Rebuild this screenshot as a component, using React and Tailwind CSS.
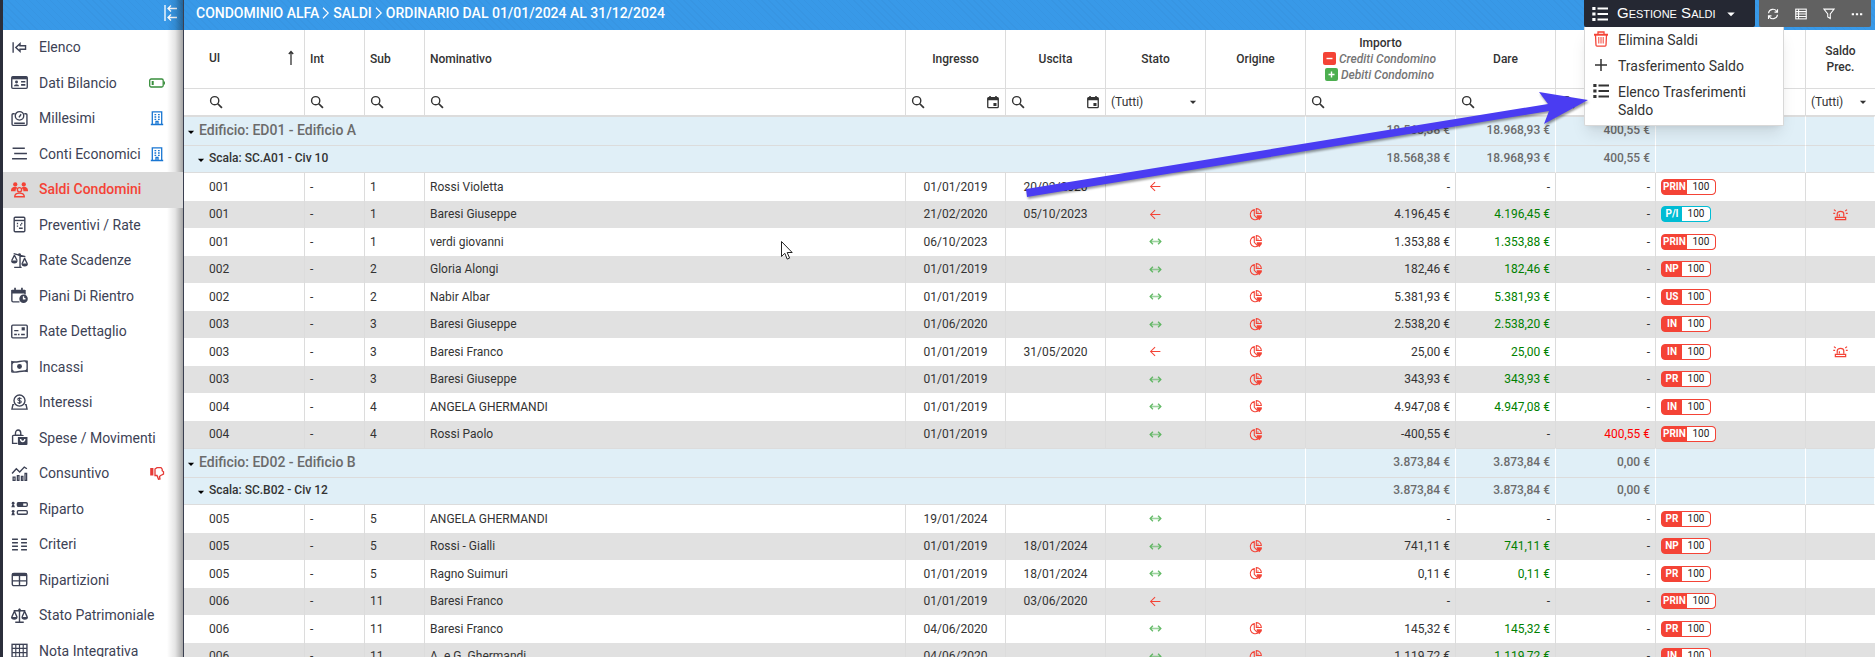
import React from "react";

const stroke = { fill: "none", stroke: "currentColor", strokeWidth: 1.3 };

function Icon({ size = "size-4", box = "0 0 16 16", children }) {
  return (
    <svg viewBox={box} className={`${size} shrink-0`} aria-hidden="true" {...stroke}>
      {children}
    </svg>
  );
}

const solid = { fill: "currentColor", stroke: "none" };

const glyphs = {
  back: (
    <>
      <path d="M2 3v10M4.500 8l4-3.600v2h5.200v3.200H8.500v2z" />
    </>
  ),
  idCard: (
    <>
      <rect x="0.700" y="2.500" width="14.600" height="11" rx="1" />
      <path d="M1 3.800h14" strokeWidth="2.400" />
      <circle cx="5.200" cy="7.500" r="1.400" {...solid} />
      <path d="M2.800 11.500c0-2.600 4.800-2.600 4.800 0zM9.500 6.500h4v1.500h-4zM9.500 9.500h4V11h-4z" {...solid} />
    </>
  ),
  scale: (
    <>
      <path d="M3.500 3.500H2a1 1 0 0 0-1 1v9a1 1 0 0 0 1 1h12a1 1 0 0 0 1-1v-9a1 1 0 0 0-1-1h-1.500M3 12.500h10" />
      <circle cx="8" cy="5.500" r="4" />
      <path d="M7.500 7l2-3" />
    </>
  ),
  lines: <path d="M1.500 3h11.500M3 8h12M1 13h14" />,
  people: (
    <>
      <circle cx="4" cy="3.200" r="2" {...solid} />
      <circle cx="12" cy="3.200" r="2" {...solid} />
      <path d="M0 9c0-4 5-4.500 6-2.200-1.500.7-1.800 1.500-1.600 2.800H0zM16 9c0-4-5-4.500-6-2.200 1.500.7 1.800 1.500 1.600 2.800H16z" {...solid} />
      <circle cx="8" cy="8.200" r="2" />
      <path d="M3.500 14.800c0-4.500 9-4.500 9 0z" />
    </>
  ),
  calculator: (
    <>
      <rect x="3" y="1.200" width="10" height="13.600" rx="1" />
      <path d="M3 4.200h10" />
      <path d="M5.500 7h1.200M9.500 7h1.200M5.500 9.500h1.200M8.500 8.500h1.200M7.500 11.500H11" />
    </>
  ),
  scalesTilt: (
    <>
      <path d="M8.500 2v12.500M3 14.500h7M2.500 1.500l11 3M3.200 3L.7 8M3.200 3l2.500 5M12.800 6l-2.400 5M12.800 6l2.500 5" />
      <path d="M0 8h6.200a3.100 2.800 0 0 1-6.200 0zM9.800 10.800H16a3.100 2.800 0 0 1-6.200 0z" {...solid} />
      <circle cx="8" cy="2.500" r="1.300" {...solid} />
    </>
  ),
  calendarClock: (
    <>
      <path d="M8 14H2a1.200 1.200 0 0 1-1.200-1.200V3.500h12.400V7" />
      <path d="M.8 2.500h12.400V6H.8zM3 .8h1.600v2H3zM9.500.8h1.600v2H9.500z" {...solid} />
      <circle cx="11.800" cy="11" r="4" {...solid} />
      <path d="M11.800 8.800V11h1.800" stroke="white" />
    </>
  ),
  certificate: (
    <>
      <rect x="0.700" y="2" width="14.600" height="12" rx="1" />
      <path d="M3 7.200h4M3 10.800h2.500M6.500 10.800h1.500M9.500 10.800H13" />
      <path d="M10 4h3v3h-3z" {...solid} />
    </>
  ),
  cash: (
    <>
      <path d="M.8 3.500c5 1.500 9.500-2 14.400-.5v9.500c-5-1.500-9.500 2-14.400.5z" />
      <circle cx="8" cy="8" r="2.300" {...solid} />
      <path d="M1 3.500h2.500L1 6zM15 12.500h-2.500L15 10zM1 13v-2.500L3.500 13zM15 3v2.500L12.500 3z" {...solid} />
    </>
  ),
  coin: (
    <>
      <circle cx="8" cy="6.200" r="5.200" />
      <path d="M9.800 4.800C9 3.300 6.300 3.700 6.400 5.100c.1 1.500 3.300.8 3.300 2.300S7 9 6.200 7.700M8 3v6.500" strokeWidth="1" />
      <path d="M3 10H1.800l-.9 4.200h14.200L14.200 10H13" />
    </>
  ),
  bag: (
    <>
      <path d="M6 13.500H1.500V6.500c0-1 10-1 10 0M4.200 6V4c0-4 5-4 5 0v2" />
      <path d="M6.500 7.500h9V14a1 1 0 0 1-1 1h-7a1 1 0 0 1-1-1z" {...solid} />
      <path d="M9 9.500c0 3 4 3 4 0" stroke="white" />
    </>
  ),
  chart: (
    <>
      <path d="M1 8l4-4.500 3.200 3L12.500 2 15 3.500" />
      <path d="M2 11.500h1.800v3H2zM6 10h1.500v4.500H6zM9.800 10.800h1.400v3.700H9.800zM13.200 8h1.500v6.500h-1.500z" strokeWidth="1.200" />
    </>
  ),
  share: (
    <>
      <circle cx="2" cy="3" r="1.300" {...solid} />
      <path d="M.3 6.800h3.400L2.700 4h-1.400zM.3 14.300h3.400l-1-2.800h-1.400z" {...solid} />
      <circle cx="2" cy="10.600" r="1.300" {...solid} />
      <rect x="6" y="2.600" width="9.300" height="3.400" rx="1" />
      <path d="M6 2.600h5.500V6H6z" {...solid} />
      <rect x="6" y="10" width="9.300" height="3.400" rx="1" />
    </>
  ),
  columns: <path d="M1 3h5.500M1 6.300h5.500M1 9.700h5.500M1 13h5.500M9.500 3H15M9.500 6.300H15M9.500 9.700H15M9.500 13H15" />,
  table: (
    <>
      <rect x="1.200" y="2.200" width="13.600" height="11.600" rx="1.500" />
      <path d="M1 3.500h14" strokeWidth="2.600" />
      <path d="M1 9.300h14M8 4v10" />
    </>
  ),
  scales: (
    <>
      <path d="M8 1.500v12.500M4 14.300h8M2.500 3.500h11M3.200 4L.7 9.500M3.200 4l2.500 5.500M12.800 4l-2.400 5.500M12.800 4l2.500 5.500" />
      <path d="M0 9.300h6.200a3.100 2.600 0 0 1-6.200 0zM9.800 9.300H16a3.100 2.600 0 0 1-6.200 0z" {...solid} />
      <circle cx="8" cy="3" r="1.300" {...solid} />
    </>
  ),
  grid: (
    <>
      <rect x="1" y="2.200" width="14" height="12" />
      <path d="M1 6h14M1 10h14M4.500 2v12M8 2v12M11.500 2v12" strokeWidth="1.100" />
    </>
  ),
  battery: (
    <>
      <rect x="0.700" y="4" width="13.500" height="8" rx="1.500" />
      <path d="M15.300 6.500v3" />
      <path d="M2.700 6h2v4h-2z" {...solid} />
    </>
  ),
  building: (
    <>
      <path d="M3.300 14.500V1.800h9.400v12.700M1.800 14.500h12.400M7 14v-2.500h2V14" />
      <path d="M5.500 4.700h1.700M9 4.700h1.700M5.500 7h1.700M9 7h1.700M5.500 9.300h1.700M9 9.300h1.700" />
    </>
  ),
  thumbDown: (
    <>
      <path d="M1.200 3h3.200v7.500H1.200z" {...solid} />
      <path d="M6 4l2-1.300h4l1.200 1.500v1.500l1.300 1v2.500l-2.800 1.300-1.200 1 .5 2.500-1.500.3L8 10.500H6z" />
    </>
  ),
  list: (
    <>
      <path d="M5.500 2.500H16M5.500 8H16M5.500 13.500H16" strokeWidth="1.900" />
      <path d="M.3 1h3.200v3H.3zM.3 6.500h3.200v3H.3zM.3 12h3.200v3H.3z" {...solid} />
    </>
  ),
  trash: (
    <>
      <path d="M1 3.500h14M5 3V1h6v2M2.500 4l.5 10.200a1 1 0 0 0 1 .9h8a1 1 0 0 0 1-.9L13.500 4" />
      <path d="M5.800 6v6.500M8 6v6.500M10.200 6v6.500" strokeWidth="1" />
      <path d="M1 3h14v1.600H1z" {...solid} />
    </>
  ),
  plus: <path d="M8 2v12M2 8h12" strokeWidth="1.500" />,
  search: (
    <>
      <circle cx="6.500" cy="6.500" r="4.700" strokeWidth="1.600" />
      <path d="M10 10l4.800 4.800" strokeWidth="2" />
    </>
  ),
  calendar: (
    <>
      <rect x="2" y="3" width="12" height="11.500" rx="1" strokeWidth="1.500" />
      <path d="M2 3h12v3H2zM3.700 1h1.800v2H3.700zM10.500 1h1.800v2h-1.800zM8.500 9h3.500v3.500H8.500z" {...solid} />
    </>
  ),
  caret: <path d="M3 6h10l-5 5z" {...solid} />,
  arrowLeft: <path d="M14 8H2M7.500 2.500L2 8l5.500 5.500" />,
  arrowBoth: (
    <>
      <path d="M2 8h12" strokeWidth="2" opacity="0.550" />
      <path d="M4.800 4.700L1.500 8l3.300 3.300M11.200 4.700L14.500 8l-3.300 3.300" strokeWidth="1.700" opacity="0.850" />
    </>
  ),
  pie: (
    <>
      <path d="M6.500 2A6.300 6.300 0 1 0 11 13.600L6.500 9z" />
      <path d="M9 .8a6 6 0 0 1 6.200 6H9z" />
      <path d="M11 4v2.500" strokeWidth="1" />
      <path d="M9.500 9h6.300v2.200L12.700 15 9.500 11z" {...solid} />
    </>
  ),
  siren: (
    <>
      <path d="M4.500 10.500V7.200c0-3.500 7-3.500 7 0v3.300M6.800 10V7.800" />
      <path d="M2.500 11h11v2.500h-11z" />
      <path d="M.3 6.800h2M1 2.800l1.900 1.500M15.700 6.800h-2M15 2.800l-1.900 1.500" />
    </>
  ),
  refresh: (
    <>
      <path d="M2 7a6 6 0 0 1 11.300-2M14 9A6 6 0 0 1 2.700 11M14 1.500V5.500h-4M2 14.500v-4h4" strokeWidth="1.500" />
    </>
  ),
  rows: (
    <>
      <rect x="1" y="1.500" width="14" height="13" strokeWidth="1.400" />
      <path d="M1 4.800h14M1 8h14M1 11.200h14M4.800 1.500v13" strokeWidth="1.400" />
    </>
  ),
  funnel: <path d="M1.200 1.500h13.600L9.700 8v6l-3.400-2V8z" strokeWidth="1.400" />,
  dots: <path d="M1 7h3v2.500H1zM6.500 7h3v2.500h-3zM12 7h3v2.500h-3z" {...solid} />,
  chevron: <path d="M4 1l7 7-7 7" strokeWidth="1.500" />,
  collapse: (
    <>
      <path d="M2 0v16M14 3.500H5M8 .5l-3 3 3 3M14 12.500H5M8 9.500l-3 3 3 3" />
    </>
  ),
  sortUp: <path d="M8 15V1.500M5.800 4L8 1.500 10.200 4" strokeWidth="1.300" />,
};

const menu = [
  ["Elenco", "back"],
  ["Dati Bilancio", "idCard", "battery", "text-[#388e3c]"],
  ["Millesimi", "scale", "building", "text-[#1976d2]"],
  ["Conti Economici", "lines", "building", "text-[#1976d2]"],
  ["Saldi Condomini", "people"],
  ["Preventivi / Rate", "calculator"],
  ["Rate Scadenze", "scalesTilt"],
  ["Piani Di Rientro", "calendarClock"],
  ["Rate Dettaglio", "certificate"],
  ["Incassi", "cash"],
  ["Interessi", "coin"],
  ["Spese / Movimenti", "bag"],
  ["Consuntivo", "chart", "thumbDown", "text-[#e53935]"],
  ["Riparto", "share"],
  ["Criteri", "columns"],
  ["Ripartizioni", "table"],
  ["Stato Patrimoniale", "scales"],
  ["Nota Integrativa", "grid"],
];

const D = "-";
// [ui, sub, name, in, out, closed, origin, importo, dare, avere, tag, alarm]
const blocks = [
  {
    building: "Edificio: ED01 - Edificio A",
    stair: "Scala: SC.A01 - Civ 10",
    totals: ["18.568,38 €", "18.968,93 €", "400,55 €"],
    rows: [
      ["001", "1", "Rossi Violetta", "01/01/2019", "20/02/2020", 1, 0, D, D, D, "PRIN", 0],
      ["001", "1", "Baresi Giuseppe", "21/02/2020", "05/10/2023", 1, 1, "4.196,45 €", "4.196,45 €", D, "P/I", 1],
      ["001", "1", "verdi giovanni", "06/10/2023", "", 0, 1, "1.353,88 €", "1.353,88 €", D, "PRIN", 0],
      ["002", "2", "Gloria Alongi", "01/01/2019", "", 0, 1, "182,46 €", "182,46 €", D, "NP", 0],
      ["002", "2", "Nabir Albar", "01/01/2019", "", 0, 1, "5.381,93 €", "5.381,93 €", D, "US", 0],
      ["003", "3", "Baresi Giuseppe", "01/06/2020", "", 0, 1, "2.538,20 €", "2.538,20 €", D, "IN", 0],
      ["003", "3", "Baresi Franco", "01/01/2019", "31/05/2020", 1, 1, "25,00 €", "25,00 €", D, "IN", 1],
      ["003", "3", "Baresi Giuseppe", "01/01/2019", "", 0, 1, "343,93 €", "343,93 €", D, "PR", 0],
      ["004", "4", "ANGELA GHERMANDI", "01/01/2019", "", 0, 1, "4.947,08 €", "4.947,08 €", D, "IN", 0],
      ["004", "4", "Rossi Paolo", "01/01/2019", "", 0, 1, "-400,55 €", D, "400,55 €", "PRIN", 0],
    ],
  },
  {
    building: "Edificio: ED02 - Edificio B",
    stair: "Scala: SC.B02 - Civ 12",
    totals: ["3.873,84 €", "3.873,84 €", "0,00 €"],
    rows: [
      ["005", "5", "ANGELA GHERMANDI", "19/01/2024", "", 0, 0, D, D, D, "PR", 0],
      ["005", "5", "Rossi - Gialli", "01/01/2019", "18/01/2024", 0, 1, "741,11 €", "741,11 €", D, "NP", 0],
      ["005", "5", "Ragno Suimuri", "01/01/2019", "18/01/2024", 0, 1, "0,11 €", "0,11 €", D, "PR", 0],
      ["006", "11", "Baresi Franco", "01/01/2019", "03/06/2020", 1, 0, D, D, D, "PRIN", 0],
      ["006", "11", "Baresi Franco", "04/06/2020", "", 0, 1, "145,32 €", "145,32 €", D, "PR", 0],
      ["006", "11", "A. e G. Ghermandi", "04/06/2020", "", 0, 1, "1.119,72 €", "1.119,72 €", D, "IN", 0],
    ],
  },
];

const texture =
  "bg-[#3899e8] bg-[repeating-linear-gradient(45deg,transparent_0_4px,rgba(0,0,0,0.025)_4px_5px)]";

function Sidebar() {
  return (
    <aside className="relative w-[181px] shrink-0 overflow-hidden border-r border-[#3a3f50] bg-white">
      <div className={`flex h-[30px] items-center justify-end pr-1 text-white ${texture}`}>
        <button aria-label="Comprimi menu" className="-mt-1">
          <Icon>{glyphs.collapse}</Icon>
        </button>
      </div>
      <nav>
        <ul>
          {menu.map(([label, icon, extra, color]) => {
            const active = label === "Saldi Condomini";
            return (
              <li key={label} className="odd:h-9 even:h-[35px]">
                <a
                  href="#"
                  className={`relative flex h-full items-center pb-[2px] pl-2 pr-[18px] text-sm ${
                    active ? "z-10 bg-[#dadada] font-medium text-[#f44336]" : "text-[#3d4255]"
                  }`}
                >
                  <span className="flex w-7 items-center">
                    <Icon size="size-[17px]">{glyphs[icon]}</Icon>
                  </span>
                  <span className="flex-1 whitespace-nowrap">{label}</span>
                  {extra && (
                    <span className={color}>
                      <Icon>{glyphs[extra]}</Icon>
                    </span>
                  )}
                </a>
              </li>
            );
          })}
        </ul>
      </nav>
      <div className="pointer-events-none absolute inset-y-0 right-0 w-4 bg-linear-to-r from-transparent via-black/10 to-black/35" />
    </aside>
  );
}

function Toolbar() {
  const tools = [
    ["Aggiorna", "refresh"],
    ["Colonne", "rows"],
    ["Filtro", "funnel"],
    ["Altro", "dots"],
  ];
  return (
    <header className={`flex h-[30px] items-start justify-between pl-3 pr-1 text-white ${texture}`}>
      <h1 className="flex h-[26px] items-center gap-px text-sm font-medium">
        CONDOMINIO ALFA
        <Icon size="size-3">{glyphs.chevron}</Icon>
        SALDI
        <Icon size="size-3">{glyphs.chevron}</Icon>
        ORDINARIO DAL 01/01/2024 AL 31/12/2024
      </h1>
      <div className="flex gap-1">
        <div className="relative">
          <button className="flex h-[27px] w-[171px] items-center rounded-b-xs bg-[#252833] pl-2 font-['Liberation_Sans',sans-serif] text-[15px] [font-variant:small-caps]">
            <Icon>{glyphs.list}</Icon>
            <span className="ml-[9px] mr-[9px] whitespace-nowrap">Gestione Saldi</span>
            <Icon size="size-3">{glyphs.caret}</Icon>
          </button>
          <ul className="absolute left-0 top-[27px] z-20 w-[200px] rounded-b-xs border border-t-0 border-[#d8d8d8] bg-white text-sm leading-[18px] text-[#333] shadow-lg">
            <li>
              <button className="flex w-full gap-[9px] px-2 py-1 text-left">
                <span className="text-[#f44336]">
                  <Icon>{glyphs.trash}</Icon>
                </span>
                Elimina Saldi
              </button>
            </li>
            <li>
              <button className="flex w-full gap-[9px] px-2 py-1 text-left">
                <Icon>{glyphs.plus}</Icon>
                Trasferimento Saldo
              </button>
            </li>
            <li>
              <button className="flex w-full gap-[9px] px-2 pb-[6px] pt-1 text-left">
                <Icon>{glyphs.list}</Icon>
                Elenco Trasferimenti Saldo
              </button>
            </li>
          </ul>
        </div>
        <div className="flex rounded-b-xs bg-[#616161]">
          {tools.map(([label, icon]) => (
            <button key={icon} aria-label={label} className="flex h-[27px] w-7 items-center justify-center">
              <Icon size="size-3">{glyphs[icon]}</Icon>
            </button>
          ))}
        </div>
      </div>
    </header>
  );
}

function TextFilter({ label, indent = "pl-[5px]", date }) {
  return (
    <label className={`flex items-center pr-[5px] text-[#333] ${indent}`}>
      <Icon size="size-[14px]">{glyphs.search}</Icon>
      <input aria-label={`Filtra ${label}`} className="w-0 min-w-0 flex-1 bg-transparent px-1 outline-none" />
      {date && <Icon size="size-[14px]">{glyphs.calendar}</Icon>}
    </label>
  );
}

function SelectFilter({ label }) {
  return (
    <label className="flex items-center pl-[5px] pr-[7px]">
      <select aria-label={`Filtra ${label}`} className="w-0 min-w-0 flex-1 appearance-none bg-transparent outline-none">
        <option>(Tutti)</option>
      </select>
      <Icon size="size-[10px]">{glyphs.caret}</Icon>
    </label>
  );
}

function Tag({ code }) {
  const color = code === "P/I" ? "border-[#00bcd4] bg-[#00bcd4]" : "border-[#f44336] bg-[#f44336]";
  return (
    <span className={`inline-flex h-4 overflow-hidden rounded-sm border align-middle text-[10px] leading-[14px] ${color}`}>
      <span className="min-w-5 px-px text-center font-bold text-white">{code}</span>
      <span className="w-7 rounded-r-[3px] bg-white text-center text-[#222]">100</span>
    </span>
  );
}

function GroupRow({ title, totals, level }) {
  const top = level === 0;
  return (
    <tr className={`bg-[#e0eff7] ${top ? "h-[30px]" : "h-[27px]"}`}>
      <th
        colSpan={8}
        scope="rowgroup"
        className={`border-y border-r border-y-[#dcdcdc] border-r-white pb-[2px] text-left font-medium ${
          top ? "pl-[2px] text-sm text-[#6b6b6b]" : "border-t-0 pl-3 text-xs text-[#333]"
        }`}
      >
        <span className="flex items-center gap-[3px]">
          <span className="pt-1 text-black">
            <Icon size="size-[10px]">{glyphs.caret}</Icon>
          </span>
          {title}
        </span>
      </th>
      {[...totals, "", ""].map((value, i) => (
        <td
          key={i}
          className={`border-b border-r border-b-[#dcdcdc] border-r-white px-[5px] pb-[2px] text-right font-medium text-[#6b6b6b] ${
            top ? "border-t border-t-[#dcdcdc]" : ""
          }`}
        >
          {value}
        </td>
      ))}
    </tr>
  );
}

function DataRow({ row }) {
  const [ui, sub, name, from, to, closed, origin, importo, dare, avere, tag, alarm] = row;
  const cell = "border-r border-[#dcdcdc] px-[5px] pb-px";
  return (
    <tr className="h-7 bg-white nth-[2n]:h-[27px] nth-[2n]:bg-[#e1e1e1]">
      <td className="border-r border-[#dcdcdc] pb-px pl-[25px]">{ui}</td>
      <td className={cell}>-</td>
      <td className={cell}>{sub}</td>
      <td className={cell}>{name}</td>
      <td className={`${cell} text-center`}>{from}</td>
      <td className={`${cell} text-center`}>{to}</td>
      <td className={cell}>
        <span className={`flex justify-center ${closed ? "text-[#f44336]" : "text-[#4caf50]"}`}>
          <Icon size="size-[13px]">{closed ? glyphs.arrowLeft : glyphs.arrowBoth}</Icon>
        </span>
      </td>
      <td className={cell}>
        {!!origin && (
          <span className="flex justify-center text-[#f44336]">
            <Icon size="size-[13px]">{glyphs.pie}</Icon>
          </span>
        )}
      </td>
      <td className={`${cell} text-right`}>{importo}</td>
      <td className={`${cell} text-right ${dare === D ? "" : "text-[#008000]"}`}>{dare}</td>
      <td className={`${cell} text-right ${avere === D ? "" : "text-[#ff0000]"}`}>{avere}</td>
      <td className={cell}>
        <span className="flex">
          <Tag code={tag} />
        </span>
      </td>
      <td className="pb-px">
        {!!alarm && (
          <span className="flex justify-center text-[#f44336]">
            <Icon size="size-[15px]">{glyphs.siren}</Icon>
          </span>
        )}
      </td>
    </tr>
  );
}

function Legend({ plus, children }) {
  return (
    <span className="flex items-center justify-center gap-[3px] whitespace-nowrap pr-[2px] italic text-[#757575]">
      <span className={`rounded-xs text-white ${plus ? "bg-[#4caf50]" : "bg-[#f44336]"}`}>
        <svg viewBox="0 0 13 13" className="size-[13px]" fill="none" stroke="white" strokeWidth="1.4" aria-hidden="true">
          <path d={plus ? "M6.500 3.500v6M3.500 6.500h6" : "M3.500 6.500h6"} />
        </svg>
      </span>
      {children}
    </span>
  );
}

function Grid() {
  const head = "border-b border-r border-[#dcdcdc] px-[5px] pb-px font-medium";
  const filter = "border-b border-r border-[#dcdcdc] p-0 font-normal";
  return (
    <table className="w-full table-fixed border-separate border-spacing-0 text-xs text-[#333]">
      <colgroup>
        <col className="w-[121px]" />
        <col className="w-[60px]" />
        <col className="w-[60px]" />
        <col />
        <col className="w-[100px]" />
        <col className="w-[100px]" />
        <col className="w-[100px]" />
        <col className="w-[100px]" />
        <col className="w-[150px]" />
        <col className="w-[100px]" />
        <col className="w-[100px]" />
        <col className="w-[150px]" />
        <col className="w-[69px]" />
      </colgroup>
      <thead>
        <tr className="h-[59px]">
          <th className="border-b border-r border-[#dcdcdc] pb-[2px] pl-[25px] pr-[5px] font-medium">
            <span className="flex items-center justify-between">
              UI
              <Icon>{glyphs.sortUp}</Icon>
            </span>
          </th>
          <th className={`${head} text-left`}>Int</th>
          <th className={`${head} text-left`}>Sub</th>
          <th className={`${head} text-left`}>Nominativo</th>
          <th className={head}>Ingresso</th>
          <th className={head}>Uscita</th>
          <th className={head}>Stato</th>
          <th className={head}>Origine</th>
          <th className={head}>
            Importo
            <Legend>Crediti Condomino</Legend>
            <Legend plus>Debiti Condomino</Legend>
          </th>
          <th className={head}>Dare</th>
          <th className={head}>Avere</th>
          <th className={head} />
          <th className="border-b border-[#dcdcdc] px-[5px] pb-px font-medium">Saldo Prec.</th>
        </tr>
        <tr className="h-[27px]">
          <td className={filter}><TextFilter label="UI" indent="pl-[25px]" /></td>
          <td className={filter}><TextFilter label="Int" /></td>
          <td className={filter}><TextFilter label="Sub" /></td>
          <td className={filter}><TextFilter label="Nominativo" /></td>
          <td className={filter}><TextFilter label="Ingresso" date /></td>
          <td className={filter}><TextFilter label="Uscita" date /></td>
          <td className={filter}><SelectFilter label="Stato" /></td>
          <td className={filter} />
          <td className={filter}><TextFilter label="Importo" /></td>
          <td className={filter}><TextFilter label="Dare" /></td>
          <td className={filter}><TextFilter label="Avere" /></td>
          <td className={filter} />
          <td className="border-b border-[#dcdcdc] p-0"><SelectFilter label="Saldo Prec." /></td>
        </tr>
      </thead>
      {blocks.map((b) => (
        <React.Fragment key={b.building}>
          <tbody>
            <GroupRow level={0} title={b.building} totals={b.totals} />
            <GroupRow level={1} title={b.stair} totals={b.totals} />
          </tbody>
          <tbody>
            {b.rows.map((row, i) => (
              <DataRow key={i} row={row} />
            ))}
          </tbody>
        </React.Fragment>
      ))}
    </table>
  );
}

export default function App() {
  return (
    <div className="flex h-screen overflow-hidden bg-white font-[Roboto,sans-serif]">
      <div className="w-[3px] shrink-0 bg-[#2b2e3b]" />
      <Sidebar />
      <main className="relative min-w-0 flex-1 overflow-hidden">
        <Toolbar />
        <Grid />
        <svg
          viewBox="0 0 570 120"
          className="pointer-events-none absolute right-[285px] top-[85px] z-30 h-[120px] w-[570px] drop-shadow-[1px_2px_1px_rgba(0,0,0,0.4)]"
          aria-hidden="true"
        >
          <path d="M6 104L528 19L519 7L568 15L524 39L529 26L7 112z" fill="#4a3cf2" />
        </svg>
        <svg viewBox="0 0 12 19" className="pointer-events-none absolute left-[597px] top-[241px] h-[19px] w-3" aria-hidden="true">
          <path d="M0.500 0.500v15l3.300-3.200 2.400 5.800 2.400-1-2.400-5.600h5z" fill="white" stroke="#222" />
        </svg>
      </main>
    </div>
  );
}
